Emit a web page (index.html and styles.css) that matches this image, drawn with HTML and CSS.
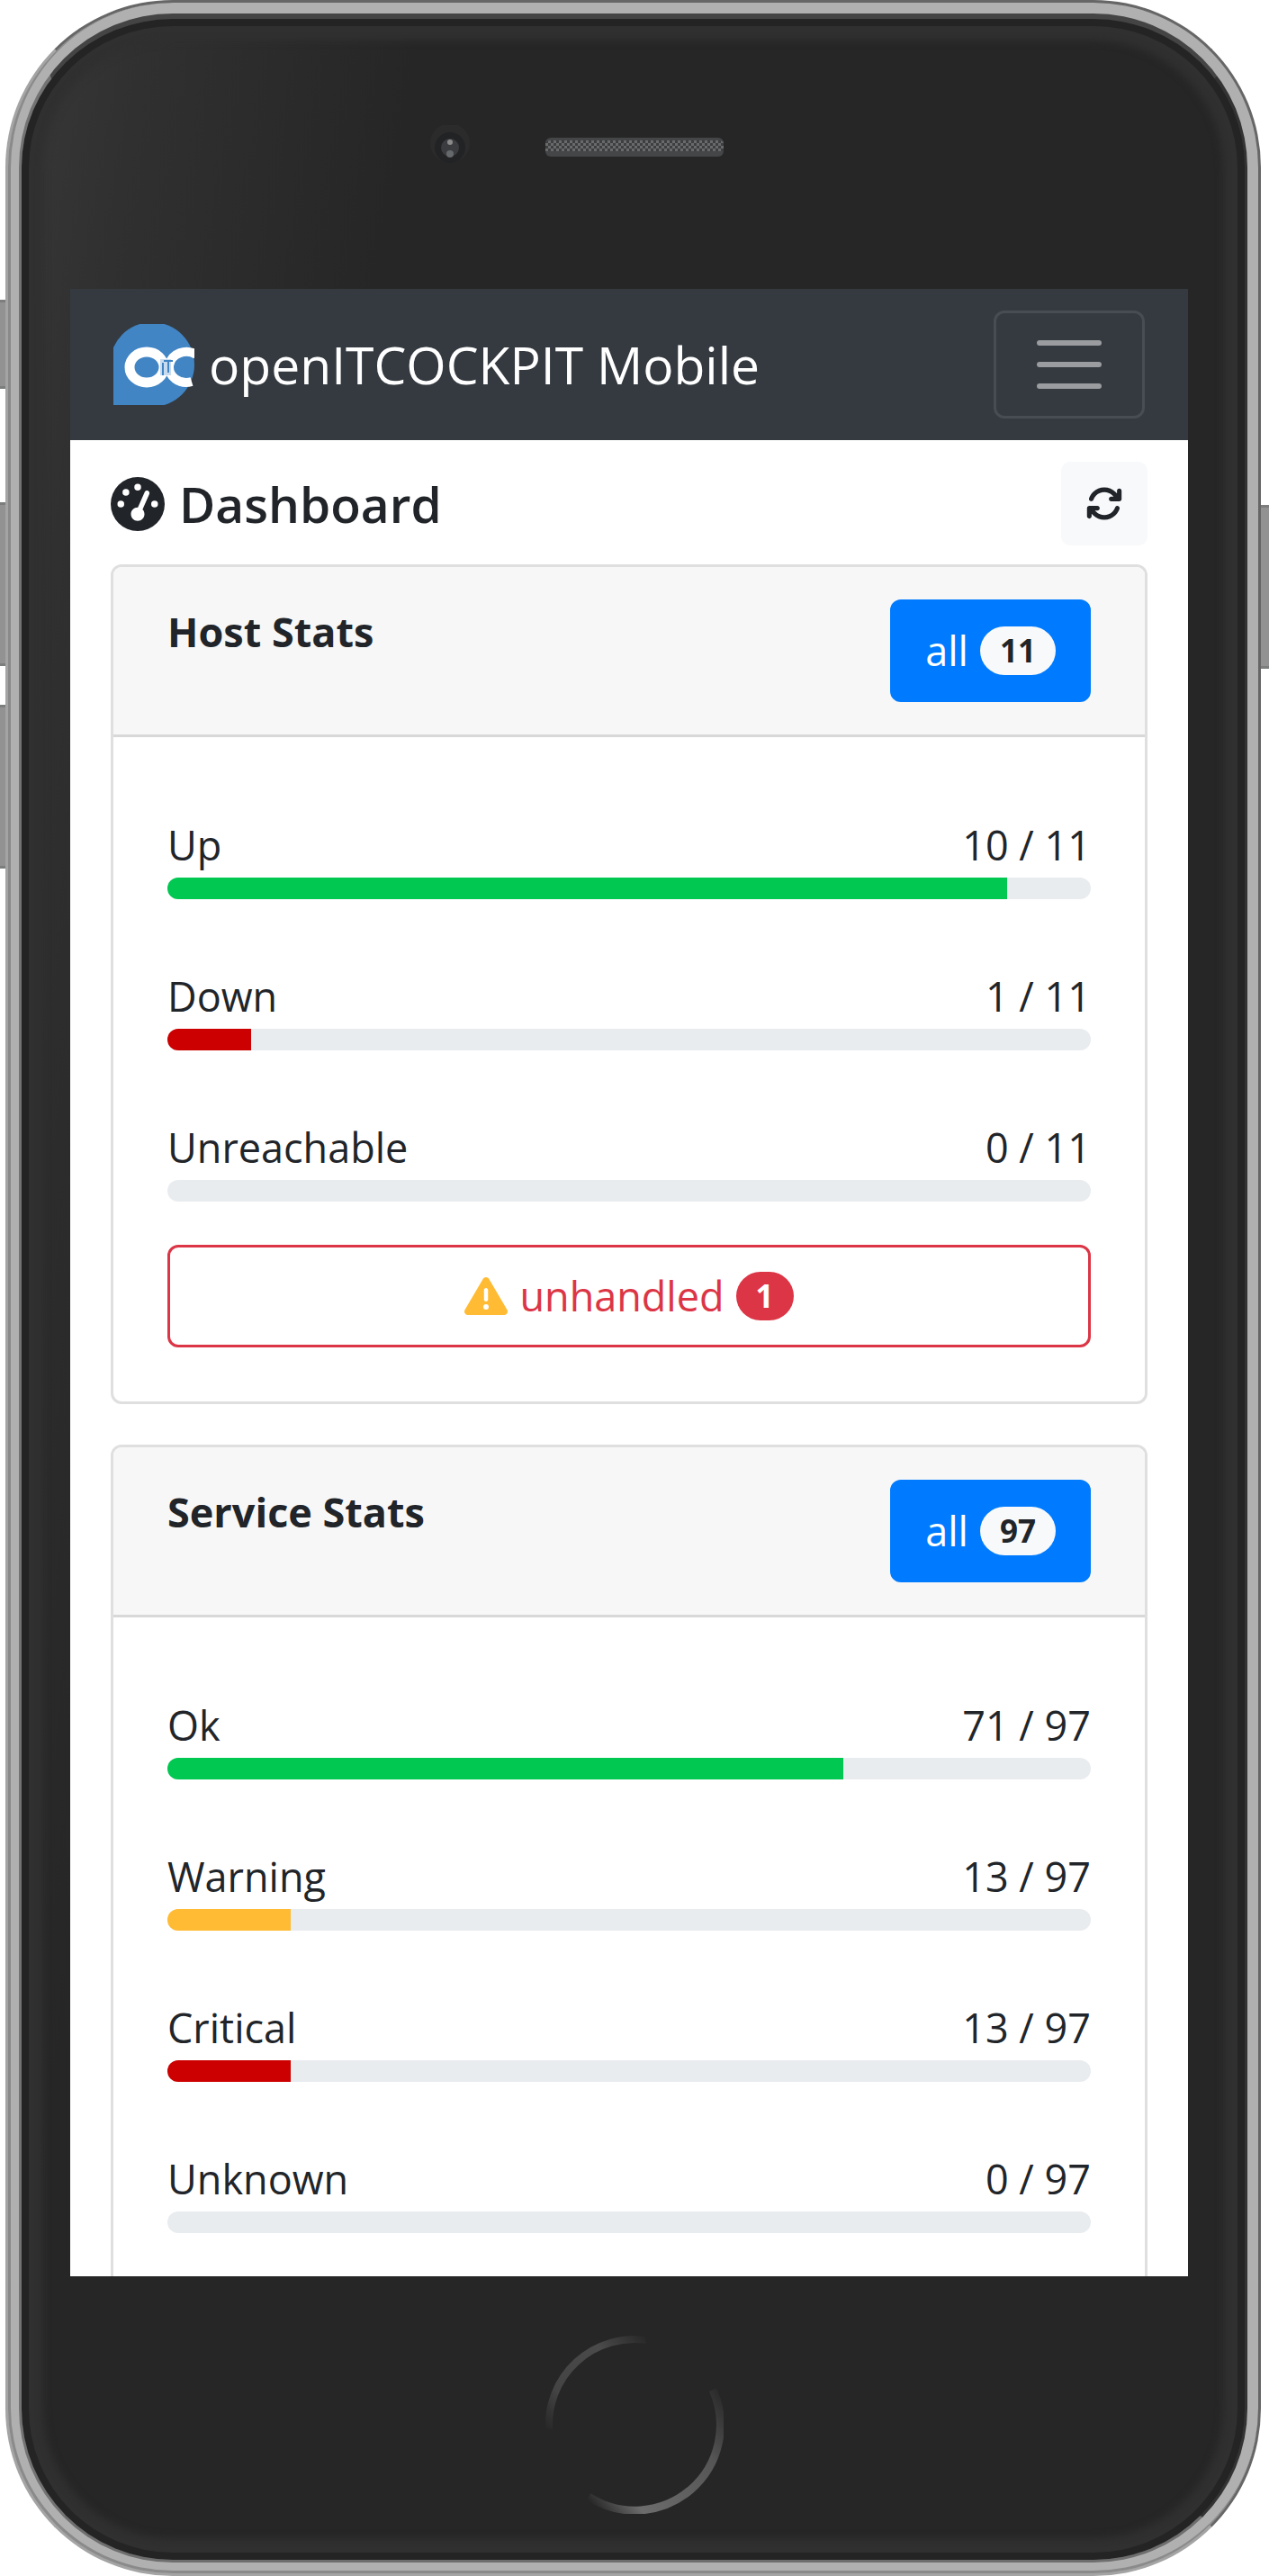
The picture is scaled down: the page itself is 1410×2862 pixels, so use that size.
FILE: index.html
```html
<!DOCTYPE html>
<html lang="en">
<head>
<meta charset="utf-8">
<meta name="viewport" content="width=device-width, initial-scale=1">
<title>openITCOCKPIT Mobile</title>
<link rel="stylesheet" href="styles.css">
</head>
<body>
<div class="device">
  <span class="side-key key-mute"></span>
  <span class="side-key key-up"></span>
  <span class="side-key key-down"></span>
  <span class="side-key key-power"></span>
  <div class="shell">
    <div class="rim">
      <div class="face">
        <div class="face-top">
          <svg class="camera" viewBox="0 0 48 48" aria-hidden="true">
            <circle cx="24" cy="20" r="22" fill="#2b2b2c"/>
            <circle cx="24" cy="25" r="17" fill="#222325"/>
            <circle cx="24" cy="25" r="10" fill="#3a3c3f"/>
            <circle cx="24" cy="19" r="3" fill="#8a8a8a"/>
            <circle cx="24" cy="32" r="4" fill="#66696c"/>
          </svg>
          <span class="speaker"></span>
        </div>

        <div class="screen">
          <nav class="navbar">
            <a class="brand" href="#">
              <svg class="brand-logo" viewBox="0 0 90 90" aria-hidden="true">
                <circle cx="43" cy="45" r="47" fill="#4185c5"/>
                <path d="M0 34h43v56H0z" fill="#4185c5"/>
                <ellipse cx="37" cy="48" rx="19" ry="17" fill="none" stroke="#fff" stroke-width="11"/>
                <path d="M92 34A19 17 0 1 0 87 64" fill="none" stroke="#fff" stroke-width="10"/>
                <path d="M52 39h12v18H52z" fill="#c9dcef"/>
                <path d="M55 43v14M56 41h10M61 41v13" fill="none" stroke="#4185c5" stroke-width="2"/>
              </svg>
              <span>openITCOCKPIT Mobile</span>
            </a>
            <button class="toggler" type="button" aria-label="Toggle navigation">
              <svg viewBox="0 0 30 30" aria-hidden="true"><path d="M4 7h22M4 15h22M4 23h22" stroke="#9a9c9f" stroke-width="2" stroke-linecap="round"/></svg>
            </button>
          </nav>

          <main class="content">
            <div class="page-head">
              <h1 class="page-title">
                <svg class="title-icon" viewBox="0 0 512 512" aria-hidden="true"><path fill="currentColor" fill-rule="evenodd" d="M0 256a256 256 0 1 1 512 0A256 256 0 1 1 0 256zM288 96a32 32 0 1 0 -64 0 32 32 0 1 0 64 0zM256 416c35.3 0 64-28.7 64-64c0-17.4-6.9-33.1-18.1-44.6L366 161.7c5.3-12.1-.2-26.3-12.3-31.6s-26.3 .2-31.6 12.3L257.9 288c-.6 0-1.3 0-1.9 0c-35.3 0-64 28.7-64 64s28.7 64 64 64zM176 144a32 32 0 1 0 -64 0 32 32 0 1 0 64 0zM96 288a32 32 0 1 0 0-64 32 32 0 1 0 0 64zm352-32a32 32 0 1 0 -64 0 32 32 0 1 0 64 0z"/></svg>
                <span>Dashboard</span>
              </h1>
              <button class="refresh" type="button" aria-label="Refresh">
                <svg viewBox="0 0 512 512" aria-hidden="true"><path fill="currentColor" d="M105.1 202.6c7.7-21.8 20.2-42.3 37.8-59.8c62.5-62.5 163.8-62.5 226.3 0L386.3 160H352c-17.7 0-32 14.3-32 32s14.3 32 32 32H463.5c0 0 0 0 0 0h.4c17.7 0 32-14.3 32-32V80c0-17.7-14.3-32-32-32s-32 14.3-32 32v35.2L414.4 97.6c-87.5-87.5-229.3-87.5-316.8 0C73.2 122 55.6 150.7 44.8 181.4c-5.9 16.7 2.9 34.9 19.5 40.8s34.9-2.9 40.8-19.5zM39 289.3c-5 1.5-9.8 4.2-13.7 8.2c-4 4-6.7 8.8-8.1 14c-.3 1.2-.6 2.5-.8 3.8c-.3 1.7-.4 3.4-.4 5.1V432c0 17.7 14.3 32 32 32s32-14.3 32-32V396.9l17.6 17.5c87.5 87.4 229.3 87.4 316.7 0c24.4-24.4 42.1-53.1 52.9-83.7c5.9-16.7-2.9-34.9-19.5-40.8s-34.9 2.9-40.8 19.5c-7.7 21.8-20.2 42.3-37.8 59.8c-62.5 62.5-163.8 62.5-226.3 0l-.1-.1L125.6 352H160c17.7 0 32-14.3 32-32s-14.3-32-32-32H48.4c-1.6 0-3.2 .1-4.8 .3s-3.1 .5-4.6 1z"/></svg>
              </button>
            </div>

            <section class="card">
              <header class="card-header">
                <h2 class="card-title">Host Stats</h2>
                <a class="btn btn-primary" href="#">all <span class="badge badge-light">11</span></a>
              </header>
              <div class="card-body">
                <div class="stat">
                  <div class="stat-line"><span>Up</span><span>10 / 11</span></div>
                  <div class="progress"><div class="bar bar-ok" style="width: 90.9%"></div></div>
                </div>
                <div class="stat">
                  <div class="stat-line"><span>Down</span><span>1 / 11</span></div>
                  <div class="progress"><div class="bar bar-critical" style="width: 9.1%"></div></div>
                </div>
                <div class="stat">
                  <div class="stat-line"><span>Unreachable</span><span>0 / 11</span></div>
                  <div class="progress"></div>
                </div>
                <a class="btn btn-outline-danger" href="#">
                  <svg class="btn-icon" viewBox="0 0 512 512" aria-hidden="true"><path fill="#ffbb33" fill-rule="evenodd" d="M256 32c14.2 0 27.3 7.5 34.5 19.8l216 368c7.3 12.4 7.3 27.7 .2 40.1S486.3 480 472 480H40c-14.3 0-27.6-7.7-34.7-20.1s-7-27.8 .2-40.1l216-368C228.7 39.5 241.8 32 256 32zm0 128c-13.3 0-24 10.7-24 24V296c0 13.3 10.7 24 24 24s24-10.7 24-24V184c0-13.3-10.7-24-24-24zm32 224a32 32 0 1 0 -64 0 32 32 0 1 0 64 0z"/></svg>
                  unhandled <span class="badge badge-danger">1</span>
                </a>
              </div>
            </section>

            <section class="card">
              <header class="card-header">
                <h2 class="card-title">Service Stats</h2>
                <a class="btn btn-primary" href="#">all <span class="badge badge-light">97</span></a>
              </header>
              <div class="card-body">
                <div class="stat">
                  <div class="stat-line"><span>Ok</span><span>71 / 97</span></div>
                  <div class="progress"><div class="bar bar-ok" style="width: 73.2%"></div></div>
                </div>
                <div class="stat">
                  <div class="stat-line"><span>Warning</span><span>13 / 97</span></div>
                  <div class="progress"><div class="bar bar-warning" style="width: 13.4%"></div></div>
                </div>
                <div class="stat">
                  <div class="stat-line"><span>Critical</span><span>13 / 97</span></div>
                  <div class="progress"><div class="bar bar-critical" style="width: 13.4%"></div></div>
                </div>
                <div class="stat">
                  <div class="stat-line"><span>Unknown</span><span>0 / 97</span></div>
                  <div class="progress"></div>
                </div>
              </div>
            </section>
          </main>
        </div>

        <div class="face-bottom">
          <button class="home" type="button" aria-label="Home">
            <svg viewBox="0 0 198 198" aria-hidden="true">
              <defs>
                <linearGradient id="ring-top" gradientUnits="userSpaceOnUse" x1="0" y1="104" x2="112" y2="0">
                  <stop offset="0" stop-color="#262626"/><stop offset=".25" stop-color="#444"/><stop offset=".7" stop-color="#4a4a4a"/><stop offset="1" stop-color="#262626"/>
                </linearGradient>
                <linearGradient id="ring-low" gradientUnits="userSpaceOnUse" x1="198" y1="60" x2="48" y2="184">
                  <stop offset="0" stop-color="#262626"/><stop offset=".3" stop-color="#555"/><stop offset=".8" stop-color="#6c6c6c"/><stop offset="1" stop-color="#262626"/>
                </linearGradient>
              </defs>
              <path d="M4 104A95 95 0 0 1 112 5" fill="none" stroke="url(#ring-top)" stroke-width="8"/>
              <path d="M186 60A95 95 0 0 1 48 179" fill="none" stroke="url(#ring-low)" stroke-width="9"/>
            </svg>
          </button>
        </div>
      </div>
    </div>
  </div>
</div>
</body>
</html>
```
FILE: styles.css
```css
* {
  box-sizing: border-box;
}

body {
  margin: 0;
  background: #fff;
  color: #212529;
  font-family: "Open Sans", "Noto Sans", sans-serif;
  font-size: 45px;
  line-height: 72px;
}

a {
  color: inherit;
  text-decoration: none;
}

button {
  padding: 0;
  border: 0;
  background: none;
  color: inherit;
  font: inherit;
}

svg {
  display: block;
}

/* Phone body */
.device {
  position: relative;
  padding: 0 9px 0 6px;
}

.shell {
  position: relative;
  border: 3px solid;
  border-color: #666 #666 #a4a4a4 #a4a4a4;
  border-radius: 186px;
  background: #b0b0b0;
}

.rim {
  padding: 12px 12px 9px 9px;
  border: solid #8a8a8a;
  border-width: 0 0 3px 3px;
  border-radius: 183px;
}

.face {
  border: solid;
  border-width: 6px 3px 3px;
  border-color: #444 #333 #6e6e6e #737373;
  border-radius: 171px;
  background: linear-gradient(100deg, #383838 0, #303030 140px, #262626 440px);
  box-shadow: inset 0 0 0 8px #242424, inset 0 0 8px 24px #303030;
}

.side-key {
  position: absolute;
  width: 12px;
  border: 3px solid #7b7e7c;
  background: #929292;
}

.key-mute,
.key-up,
.key-down {
  left: 0;
  border-left: 0;
}

.key-mute {
  top: 333px;
  height: 99px;
}

.key-up {
  top: 558px;
  height: 182px;
}

.key-down {
  top: 783px;
  height: 182px;
}

.key-power {
  top: 561px;
  right: 0;
  height: 182px;
  border-right: 0;
}

.face-top {
  display: grid;
  grid-template-columns: 1fr auto 1fr;
  align-items: center;
  height: 300px;
  padding: 0 0 16px 3px;
}

.camera {
  width: 48px;
  height: 48px;
  margin-right: 82px;
  justify-self: end;
}

.speaker {
  width: 198px;
  height: 21px;
  border: solid #444647;
  border-width: 3px 0 6px;
  border-radius: 6px;
  background: repeating-conic-gradient(#6a6a6a 0 25%, #3c3f41 0 50%) 0 0 / 6px 6px;
}

.face-bottom {
  display: flex;
  align-items: center;
  justify-content: center;
  height: 315px;
  padding: 15px 0 0 3px;
}

.home {
  width: 198px;
  height: 198px;
  border-radius: 50%;
}

/* Screen */
.screen {
  aspect-ratio: 414 / 736;
  margin: 0 63px 0 54px;
  overflow: hidden;
  background: #fff;
}

.navbar {
  display: flex;
  align-items: center;
  justify-content: space-between;
  padding: 24px 48px;
  background: #343a40;
}

.brand {
  display: flex;
  align-items: center;
  gap: 16px;
  color: #fff;
  font-size: 57px;
  white-space: nowrap;
}

.brand-logo {
  width: 90px;
  height: 90px;
}

.toggler {
  padding: 12px 36px;
  border: 3px solid #484d53;
  border-radius: 12px;
}

.toggler svg {
  width: 90px;
  height: 90px;
}

.content {
  padding: 24px 45px;
}

.page-head {
  display: flex;
  align-items: center;
  justify-content: space-between;
  margin-bottom: 21px;
}

.page-title {
  display: flex;
  align-items: center;
  gap: 16px;
  margin: 0;
  font-size: 55px;
  font-weight: 600;
}

.title-icon {
  width: 60px;
  height: 60px;
}

.refresh {
  padding: 26px 27px;
  border-radius: 10px;
  background: #f8f9fa;
}

.refresh svg {
  width: 42px;
  height: 41px;
}

/* Cards */
.card {
  margin-bottom: 45px;
  overflow: hidden;
  border: 3px solid #dfdfdf;
  border-radius: 12px;
  background: #fff;
}

.card-header {
  display: flex;
  align-items: flex-start;
  justify-content: space-between;
  padding: 36px 60px;
  border-bottom: 3px solid #d8d8d8;
  background: #f7f7f7;
}

.card-title {
  margin: 0;
  font-size: 45px;
  font-weight: 700;
}

.card-body {
  padding: 84px 60px 60px;
}

.stat + .stat {
  margin-top: 72px;
}

.stat:last-child {
  margin-bottom: 48px;
}

.stat-line {
  display: flex;
  justify-content: space-between;
}

.progress {
  height: 24px;
  overflow: hidden;
  border-radius: 12px;
  background: #e9ecef;
}

.bar {
  height: 100%;
}

.bar-ok {
  background: #00c851;
}

.bar-warning {
  background: #ffbb33;
}

.bar-critical {
  background: #c00;
}

.btn {
  display: flex;
  align-items: center;
  justify-content: center;
  gap: 13px;
  padding: 18px 36px;
  border: 3px solid;
  border-radius: 12px;
}

.btn-primary {
  border-color: #007bff;
  background: #007bff;
  color: #fff;
}

.btn-outline-danger {
  margin-top: 48px;
  border-color: #dc3545;
  color: #dc3545;
}

.btn-icon {
  width: 48px;
  height: 48px;
}

.badge {
  padding: 0 22px;
  border-radius: 30px;
  font-size: 35px;
  font-weight: 700;
  line-height: 54px;
}

.badge-light {
  background: #f8f9fa;
  color: #212529;
}

.badge-danger {
  background: #dc3545;
  color: #fff;
}
```
